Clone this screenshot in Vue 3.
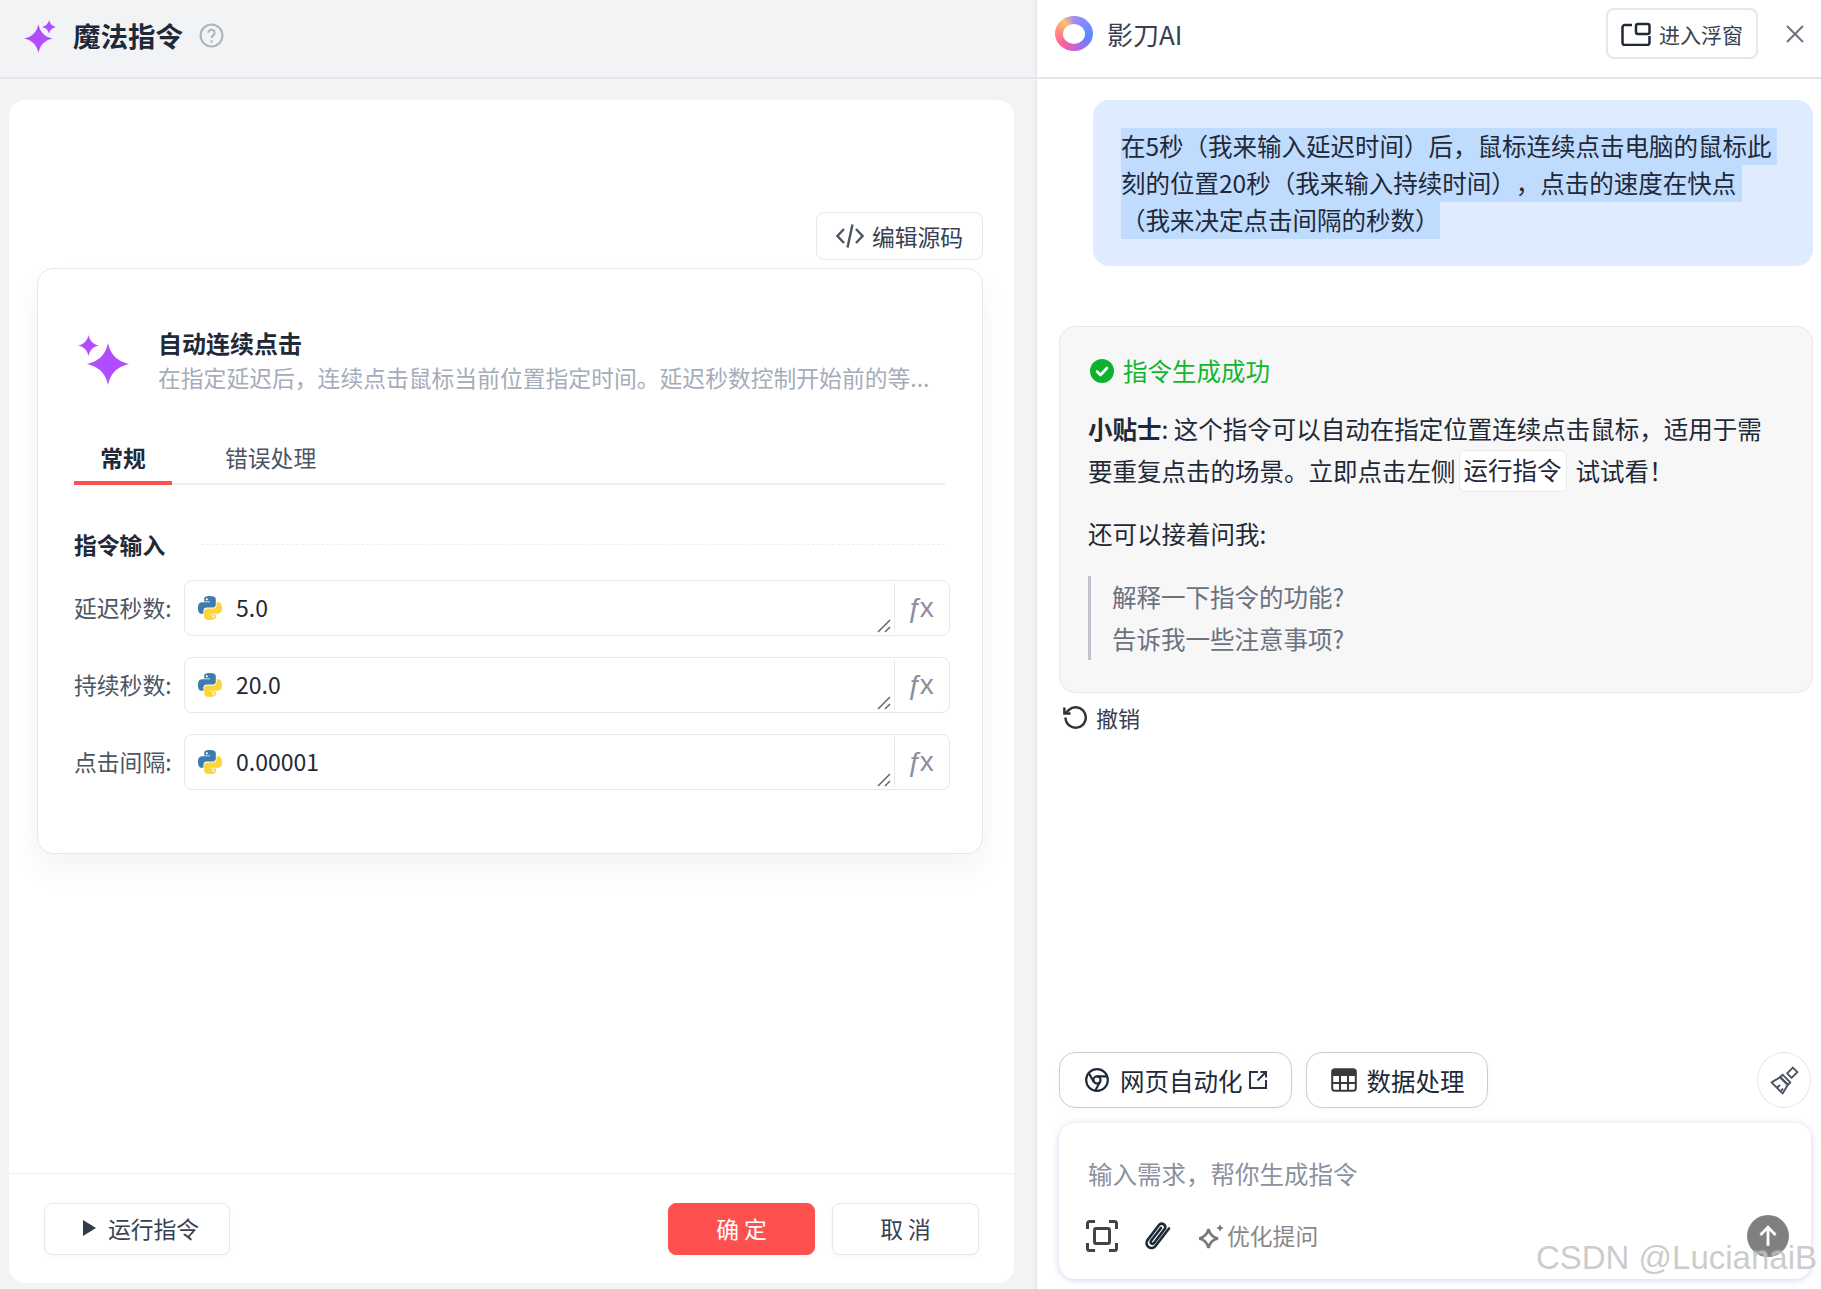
<script setup>
const params = [
  { label: '延迟秒数:', value: '5.0' },
  { label: '持续秒数:', value: '20.0' },
  { label: '点击间隔:', value: '0.00001' }
]

const star = 'M50 0C56 28 72 44 100 50C72 56 56 72 50 100C44 72 28 56 0 50C28 44 44 28 50 0Z'
</script>

<template>
  <div class="app">
    <section class="left">
      <header class="left-head">
        <svg class="head-star" viewBox="0 0 32 32">
          <path :d="star" transform="translate(1 4) scale(.27)" />
          <path :d="star" transform="translate(18 0) scale(.13)" />
        </svg>
        <h1>魔法指令</h1>
        <svg class="help" viewBox="0 0 24 24">
          <circle cx="12" cy="12" r="10.5" />
          <path d="M9 9.400a3 3 0 1 1 4.600 2.500c-1 .7-1.600 1.300-1.600 2.600" />
          <circle class="dot" cx="12" cy="17.800" r="1.200" />
        </svg>
      </header>

      <div class="left-body">
        <div class="sheet">
          <div class="sheet-main">
            <div class="source-bar">
              <button class="btn source-btn">
                <svg viewBox="0 0 28 26">
                  <path d="M8 6 1.500 13 8 20M20 6l6.500 7-6.500 7M16.500 1.500l-5 23" />
                </svg>
                编辑源码
              </button>
            </div>

            <div class="magic-card">
              <div class="magic-top">
                <svg class="magic-icon" viewBox="0 0 52 52">
                  <path :d="star" transform="translate(9 8) scale(.42)" />
                  <path :d="star" transform="translate(0 0) scale(.21)" />
                </svg>
                <div>
                  <div class="magic-title">自动连续点击</div>
                  <div class="magic-desc">在指定延迟后，连续点击鼠标当前位置指定时间。延迟秒数控制开始前的等...</div>
                </div>
              </div>

              <div class="tabs">
                <div class="tab active">常规</div>
                <div class="tab">错误处理</div>
              </div>

              <div class="section">
                <span>指令输入</span>
                <i></i>
              </div>

              <div class="rows">
                <div v-for="p in params" :key="p.label" class="row">
                  <label>{{ p.label }}</label>
                  <div class="field">
                    <svg class="py" viewBox="0 0 24 24">
                      <path fill="#3f7cad" d="M9.585 11.692h4.328s2.432.039 2.432-2.350V5.391S16.714 3 11.936 3C7.362 3 7.647 4.983 7.647 4.983l.006 2.055h4.363v.617H5.920s-2.927-.332-2.927 4.282 2.555 4.450 2.555 4.450h1.524v-2.141s-.083-2.554 2.513-2.554z" />
                      <path fill="#ffd43b" d="M14.415 12.308h-4.328s-2.432-.039-2.432 2.350v3.951S7.286 21 12.064 21c4.574 0 4.289-1.983 4.289-1.983l-.006-2.055h-4.363v-.617h6.096s2.927.332 2.927-4.282-2.555-4.450-2.555-4.450h-1.524v2.141s.083 2.554-2.513 2.554z" />
                      <circle cx="9.600" cy="5.500" r=".8" fill="#fff" />
                      <circle cx="14.400" cy="18.500" r=".8" fill="#fff" />
                    </svg>
                    <span class="value">{{ p.value }}</span>
                    <svg class="grip" viewBox="0 0 14 14">
                      <path d="M1 13 13 1M8 13l5-5" />
                    </svg>
                    <span class="fx">ƒx</span>
                  </div>
                </div>
              </div>
            </div>
          </div>

          <footer class="sheet-foot">
            <button class="btn run-btn">
              <i class="play"></i>
              运行指令
            </button>
            <div class="foot-right">
              <button class="btn ok-btn">确 定</button>
              <button class="btn cancel-btn">取 消</button>
            </div>
          </footer>
        </div>
      </div>
    </section>

    <section class="right">
      <header class="right-head">
        <div class="logo"></div>
        <span class="brand">影刀AI</span>
        <button class="btn float-btn">
          <svg viewBox="0 0 30 24">
            <path d="M11 3H4a2.500 2.500 0 0 0-2.500 2.500v15A2.500 2.500 0 0 0 4 23h22a2.500 2.500 0 0 0 2.500-2.500V14" />
            <rect x="15" y="2" width="13.500" height="10" rx="2" />
          </svg>
          进入浮窗
        </button>
        <svg class="close" viewBox="0 0 18 18">
          <path d="M1 1l16 16M17 1 1 17" />
        </svg>
      </header>

      <div class="chat">
        <div class="bubble">
          <span class="sel">在5秒（我来输入延迟时间）后，鼠标连续点击电脑的鼠标此&nbsp;<br />刻的位置20秒（我来输入持续时间），点击的速度在快点&nbsp;<br />（我来决定点击间隔的秒数）</span>
        </div>

        <div class="answer">
          <div class="ok-line">
            <svg viewBox="0 0 24 24">
              <circle cx="12" cy="12" r="12" fill="#0db32f" />
              <path d="m7 12.500 3.500 3.500L17 9" fill="none" stroke="#fff" stroke-width="2.600" stroke-linecap="round" stroke-linejoin="round" />
            </svg>
            指令生成成功
          </div>
          <p class="tip"><b>小贴士</b>: 这个指令可以自动在指定位置连续点击鼠标，适用于需要重复点击的场景。立即点击左侧<span class="tag">运行指令</span>试试看！</p>
          <p class="more">还可以接着问我:</p>
          <blockquote>
            <div>解释一下指令的功能?</div>
            <div>告诉我一些注意事项?</div>
          </blockquote>
        </div>

        <div class="undo">
          <svg viewBox="0 0 24 24">
            <path d="M4 12a9 9 0 1 0 3-6.700L3.500 8.500" />
            <path d="M3 3v5.500h5.500" />
          </svg>
          撤销
        </div>
      </div>

      <div class="composer">
        <div class="chips">
          <button class="chip">
            <svg class="chip-icon" viewBox="0 0 24 24">
              <circle cx="12" cy="12" r="10" />
              <circle cx="12" cy="12" r="3.300" />
              <path d="M12 8.700h9M14.900 13.700l-4.500 8M9.100 13.700l-4.600-7.800" />
            </svg>
            网页自动化
            <svg class="ext" viewBox="0 0 20 20">
              <path d="M10 2H2v16h16v-8M18 2l-8.500 8.500M12.500 2H18v5.500" />
            </svg>
          </button>
          <button class="chip chip-data">
            <svg class="chip-icon table" viewBox="0 0 26 24">
              <rect x="1.200" y="1.200" width="23.600" height="21.600" rx="2.500" />
              <path class="bar" d="M2 2h22v6H2z" />
              <path d="M2 15h22M9 8v14M17 8v14" />
            </svg>
            数据处理
          </button>
          <button class="broom">
            <svg viewBox="0 0 24 24">
              <path d="m18.500 2 3.500 3.500-4.500 4.500-3.500-3.500z" />
              <path d="m10.500 7.500 6 6-1.800 1.800-6-6z" />
              <path d="m8.500 9.500 6 6-4 6.500L2 13.500zM6 18l2.500-2.500M9 20.500l1.800-2.300" />
            </svg>
          </button>
        </div>

        <div class="input-box">
          <div class="placeholder">输入需求，帮你生成指令</div>
          <div class="tools">
            <svg class="frame" viewBox="0 0 32 32">
              <path d="M1.500 9V3.500a2 2 0 0 1 2-2H9M23 1.500h5.500a2 2 0 0 1 2 2V9M30.500 23v5.500a2 2 0 0 1-2 2H23M9 30.500H3.500a2 2 0 0 1-2-2V23" />
              <rect x="8.500" y="8.500" width="15" height="15" rx="1.500" />
            </svg>
            <svg class="clip" viewBox="0 0 28 32">
              <path d="M25 8.500 11.500 26a5 5 0 0 1-8-6L15.500 4.500a3.500 3.500 0 0 1 5.500 4L10 23a1.800 1.800 0 0 1-3-2.200L17 8" />
            </svg>
            <span class="polish">
              <svg viewBox="0 0 26 26">
                <path :d="star" transform="translate(0 6) scale(.19)" fill="none" stroke="#777" stroke-width="14" />
                <path :d="star" transform="translate(17 1) scale(.08)" fill="#777" />
              </svg>
              优化提问
            </span>
            <button class="send">
              <svg viewBox="0 0 24 24">
                <path d="M12 21V4M5 11l7-7 7 7" />
              </svg>
            </button>
          </div>
        </div>
      </div>
    </section>

    <div class="watermark">CSDN @LucianaiB</div>
  </div>
</template>

<style>
html,
body {
  margin: 0;
  background: #f2f3f5;
}
</style>

<style scoped>
.app {
  position: relative;
  display: flex;
  width: 1821px;
  height: 1289px;
  overflow: hidden;
  background: #f2f3f5;
  color: #1f2937;
  font-family: "Noto Sans CJK SC", "Noto Sans", sans-serif;
  font-size: 22.8px;
  text-spacing-trim: space-all;
}

.btn {
  display: flex;
  align-items: center;
  justify-content: center;
  box-sizing: border-box;
  background: #fff;
  border: 1.5px solid #e5e7eb;
  border-radius: 8px;
  color: #374151;
  font: inherit;
  padding: 0;
}

/* left side */
.left {
  display: flex;
  flex-direction: column;
  box-sizing: border-box;
  width: 1037px;
  flex: none;
  border-right: 2px solid #e6e8ec;
}

.left-head {
  display: flex;
  align-items: center;
  box-sizing: border-box;
  height: 79px;
  padding: 0 0 7px 23px;
  border-bottom: 2px solid #e5e6eb;
}

.head-star {
  width: 34px;
  height: 34px;
  margin-top: 3px;
  fill: #b14dff;
}

.left-head h1 {
  margin: 0 0 0 16px;
  font-size: 27.5px;
  font-weight: 700;
  line-height: 40px;
}

.help {
  width: 25px;
  height: 25px;
  margin-left: 16px;
  fill: none;
  stroke: #aeb3bc;
  stroke-width: 2;
}

.help .dot {
  fill: #aeb3bc;
  stroke: none;
}

.left-body {
  flex: 1;
  display: flex;
  min-height: 0;
  padding: 21px 21px 6px 9px;
}

.sheet {
  flex: 1;
  display: flex;
  flex-direction: column;
  background: #fff;
  border-radius: 16px;
}

.sheet-main {
  flex: 1;
  padding: 112px 31px 0 28px;
}

.source-bar {
  display: flex;
  justify-content: flex-end;
}

.source-btn {
  width: 167px;
  height: 48px;
  gap: 8px;
}

.source-btn svg {
  width: 28px;
  height: 26px;
  fill: none;
  stroke: #4b5563;
  stroke-width: 2.400;
}

.magic-card {
  box-sizing: border-box;
  height: 586px;
  margin-top: 8px;
  padding: 56px 32px 0 36px;
  background: #fff;
  border: 1.500px solid #e5e7eb;
  border-radius: 16px;
  box-shadow: 0 16px 30px rgba(31, 41, 55, 0.05);
}

.magic-top {
  display: flex;
  align-items: flex-start;
  gap: 28px;
}

.magic-icon {
  flex: none;
  width: 52px;
  height: 52px;
  margin: 10px 0 0 4px;
  fill: #b14dff;
}

.magic-title {
  font-size: 24px;
  font-weight: 700;
  line-height: 35px;
}

.magic-desc {
  color: #a6acb9;
  line-height: 35px;
  white-space: nowrap;
}

.tabs {
  display: flex;
  height: 54px;
  margin: 34px 5px 0 0;
  border-bottom: 2px solid #eceef1;
}

.tab {
  padding: 11px 0 0 53px;
  color: #4b5563;
  line-height: 36px;
}

.tab.active {
  width: 98px;
  box-sizing: border-box;
  padding: 11px 0 0;
  margin-bottom: -2px;
  border-bottom: 4px solid #ff5050;
  color: #1f2937;
  font-weight: 700;
  text-align: center;
}

.section {
  display: flex;
  align-items: center;
  margin: 42px 5px 18px 0;
  font-weight: 700;
  line-height: 35px;
}

.section i {
  flex: 1;
  margin-left: 36px;
  border-top: 1.500px dashed #eceef1;
}

.rows {
  display: flex;
  flex-direction: column;
  gap: 21px;
}

.row {
  display: flex;
  align-items: center;
}

.row label {
  flex: none;
  width: 110px;
  padding-bottom: 2px;
  color: #4b5563;
}

.field {
  position: relative;
  flex: 1;
  display: flex;
  align-items: center;
  box-sizing: border-box;
  height: 56px;
  padding-left: 9px;
  border: 1.500px solid #e5e7eb;
  border-radius: 8px;
}

.py {
  width: 32px;
  height: 32px;
}

.value {
  margin-left: 10px;
  padding-bottom: 3px;
  font-size: 23px;
  color: #1f2937;
}

.grip {
  position: absolute;
  right: 58px;
  bottom: 2px;
  width: 14px;
  height: 14px;
  fill: none;
  stroke: #666;
  stroke-width: 1.500;
}

.fx {
  display: flex;
  align-items: center;
  justify-content: center;
  box-sizing: border-box;
  width: 55px;
  height: 50px;
  margin-left: auto;
  padding-right: 6px;
  border-left: 1.500px solid #e5e7eb;
  color: #8a8f99;
  font-family: "Liberation Sans", sans-serif;
  font-size: 28px;
  letter-spacing: -3px;
}

.sheet-foot {
  display: flex;
  justify-content: space-between;
  box-sizing: border-box;
  height: 110px;
  padding: 29px 35px 0 35px;
  border-top: 1.500px solid #eeeff2;
}

.sheet-foot .btn {
  height: 52px;
  padding-bottom: 2px;
  box-shadow: 0 2px 4px rgba(31, 41, 55, 0.04);
}

.run-btn {
  width: 186px;
  gap: 12px;
  padding-left: 8px !important;
}

.play {
  width: 0;
  height: 0;
  border-left: 13px solid #333d4a;
  border-top: 8px solid transparent;
  border-bottom: 8px solid transparent;
}

.foot-right {
  display: flex;
  gap: 17px;
}

.ok-btn,
.cancel-btn {
  width: 147px;
}

.ok-btn {
  background: #ff5050;
  border-color: #ff5050;
  color: #fff;
}

/* right side */
.right {
  flex: 1;
  display: flex;
  flex-direction: column;
  min-width: 0;
  background: #fff;
}

.right-head {
  display: flex;
  align-items: center;
  box-sizing: border-box;
  height: 79px;
  padding: 0 17px 10px 18px;
  border-bottom: 2px solid #e5e6eb;
}

.logo {
  position: relative;
  width: 38px;
  height: 35px;
  border-radius: 50%;
  background: conic-gradient(#a688f5 0deg, #6f8bff 70deg, #5a85ff 110deg, #c563dc 170deg, #ff5f96 230deg, #ff8f82 280deg, #ffc26f 320deg, #a688f5 360deg);
}

.logo::after {
  content: "";
  position: absolute;
  inset: 7.500px 8px;
  border-radius: 50%;
  background: #fff;
}

.brand {
  margin-left: 14px;
  font-size: 26px;
  color: #374151;
}

.float-btn {
  width: 152px;
  height: 51px;
  margin-left: auto;
  gap: 8px;
  border-width: 2px;
  font-size: 21px;
}

.float-btn svg {
  width: 30px;
  height: 24px;
  fill: none;
  stroke: #1f2937;
  stroke-width: 2.500;
}

.close {
  width: 18px;
  height: 18px;
  margin-left: 28px;
  fill: none;
  stroke: #6b7280;
  stroke-width: 2;
}

.chat {
  flex: 1;
  min-height: 0;
  padding: 21px 8px 0 22px;
  font-size: 24.5px;
}

.bubble {
  box-sizing: border-box;
  height: 166px;
  margin-left: 34px;
  padding: 27px 28px 0;
  background: #dfebfe;
  border-radius: 16px;
  line-height: 37px;
  white-space: nowrap;
}

.sel {
  padding: 0 0 1.500px;
  background: #bfdbfe;
}

.answer {
  box-sizing: border-box;
  height: 367px;
  margin-top: 60px;
  padding: 26px 28px 0 28px;
  background: #f7f7f7;
  border: 1.500px solid #e9e9ea;
  border-radius: 16px;
}

.ok-line {
  display: flex;
  align-items: center;
  gap: 9px;
  color: #12b530;
  line-height: 36px;
}

.ok-line svg {
  width: 24px;
  height: 24px;
  margin-left: 2px;
}

.answer p {
  margin: 0;
  line-height: 42px;
}

.tip {
  margin-top: 19px !important;
}

.tag {
  display: inline-block;
  box-sizing: border-box;
  height: 42px;
  margin: 0 9px 0 3px;
  padding: 0 4px;
  background: #fff;
  border: 1.500px solid #e9e9ea;
  border-radius: 6px;
  line-height: 38px;
  vertical-align: top;
}

.more {
  margin-top: 21px !important;
}

blockquote {
  margin: 21px 0 0;
  padding-left: 21px;
  border-left: 3px solid #c0c4cc;
  color: #6b7280;
  line-height: 42px;
}

.undo {
  display: flex;
  align-items: center;
  gap: 8px;
  margin: 10px 0 0 2px;
  font-size: 22px;
  line-height: 28px;
  color: #374151;
}

.undo svg {
  width: 27px;
  height: 27px;
  fill: none;
  stroke: #333;
  stroke-width: 2.200;
}

.composer {
  padding: 0 10px 10px 22px;
}

.chips {
  display: flex;
  align-items: center;
  gap: 14px;
}

.chip {
  display: flex;
  align-items: center;
  box-sizing: border-box;
  height: 56px;
  padding: 0 23px 0 24px;
  background: #fff;
  border: 1.500px solid #c9cdd4;
  border-radius: 16px;
  color: #1f2937;
  font: inherit;
  font-size: 24.5px;
  box-shadow: 0 2px 8px rgba(31, 41, 55, 0.03);
}

.chip-data {
  padding: 0 22px 0 24px;
}

.chip-icon {
  width: 26px;
  height: 26px;
  margin-right: 10px;
  fill: none;
  stroke: #1f2937;
  stroke-width: 2;
}

.chip-icon.table {
  stroke: #3a3a3a;
}

.chip-icon .bar {
  fill: #3a3a3a;
  stroke: none;
}

.ext {
  width: 20px;
  height: 20px;
  margin-left: 5px;
  fill: none;
  stroke: #2b3442;
  stroke-width: 2;
}

.broom {
  display: flex;
  align-items: center;
  justify-content: center;
  box-sizing: border-box;
  width: 54px;
  height: 56px;
  margin-left: auto;
  padding: 0;
  background: #fff;
  border: 1.500px solid #e5e7eb;
  border-radius: 50%;
}

.broom svg {
  width: 31px;
  height: 31px;
  fill: none;
  stroke: #4b5563;
  stroke-width: 1.500;
  stroke-linejoin: round;
}

.input-box {
  box-sizing: border-box;
  height: 156px;
  margin-top: 15px;
  padding: 33px 22px 0 27px;
  background: #fff;
  border-radius: 16px;
  box-shadow: 0 1px 7px rgba(90, 105, 190, 0.28);
}

.placeholder {
  margin-left: 2px;
  color: #8a919f;
  font-size: 24.5px;
  line-height: 36px;
}

.tools {
  display: flex;
  align-items: center;
  height: 42px;
  margin-top: 23px;
}

.frame {
  width: 32px;
  height: 32px;
  fill: none;
  stroke: #444;
  stroke-width: 3;
}

.clip {
  width: 28px;
  height: 32px;
  margin-left: 26px;
  fill: none;
  stroke: #1f2937;
  stroke-width: 2.600;
  stroke-linecap: round;
}

.polish {
  display: flex;
  align-items: center;
  margin-left: 27px;
  padding-bottom: 1px;
  color: #888;
  line-height: 36px;
}

.polish svg {
  width: 26px;
  height: 26px;
  margin-right: 2px;
}

.send {
  display: flex;
  align-items: center;
  justify-content: center;
  width: 42px;
  height: 42px;
  margin-left: auto;
  padding: 0;
  background: #808080;
  border: none;
  border-radius: 50%;
}

.send svg {
  width: 26px;
  height: 26px;
  fill: none;
  stroke: #fff;
  stroke-width: 2.600;
}

.watermark {
  position: absolute;
  right: 4px;
  bottom: 11px;
  color: rgba(160, 160, 160, 0.55);
  font-family: "Liberation Sans", sans-serif;
  font-size: 33px;
  line-height: 40px;
  white-space: nowrap;
  text-shadow: 0 0 2px rgba(255, 255, 255, 0.8);
}
</style>
